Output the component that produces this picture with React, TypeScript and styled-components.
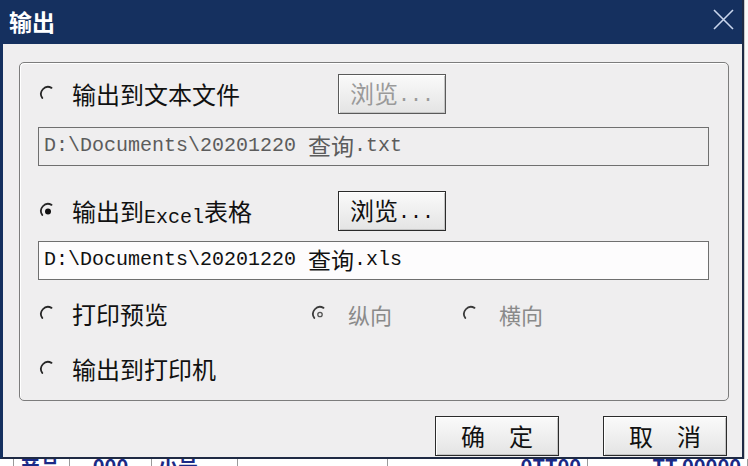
import styled, { createGlobalStyle } from 'styled-components';

const GlobalStyle = createGlobalStyle`
    html, body {
        margin: 0;
        padding: 0;
        background: #ffffff;
    }

    body {
        font-family: "Noto Sans CJK SC", "Noto Sans", sans-serif;
    }
`;

const CJK = `"Noto Sans CJK SC", "Noto Sans", sans-serif`;
const MONO = `"Liberation Mono", "Noto Sans CJK SC", monospace`;

const Page = styled.div`
    width: 748px;
    height: 466px;
    overflow: hidden;
    display: flex;
    flex-direction: column;
    background: #ffffff;
`;

const TopRow = styled.div`
    display: flex;
    height: 459px;
`;

const SideStrip = styled.div`
    flex: 1;
    border-left: 1px solid #c9c9c9;
    background: #fafafa;
`;

const Window = styled.div`
    width: 744px;
    height: 459px;
    box-sizing: border-box;
    display: flex;
    flex-direction: column;
    border-left: 3px solid #15305f;
    border-right: 2px solid #1f2a44;
    border-bottom: 2px solid #1f2a44;
    background: #efeeef;
`;

const TitleBar = styled.div`
    height: 41px;
    flex-shrink: 0;
    display: flex;
    align-items: center;
    justify-content: space-between;
    padding: 0 8px 3px 6px;
    background: #15305f;
    color: #ffffff;
    font-family: ${CJK};
    font-size: 23px;
    font-weight: 700;
`;

const CloseIcon = styled.svg`
    width: 21px;
    height: 21px;
    margin-top: -2px;
`;

const Body = styled.div`
    flex: 1;
    display: flex;
    flex-direction: column;
    padding: 18px 13px 0 16px;
`;

const GroupBox = styled.div`
    height: 339px;
    box-sizing: border-box;
    border: 1px solid #7c7c7c;
    border-radius: 5px;
    box-shadow: inset 1px 1px 0 #ffffff;
    padding: 13px 19px 0 18px;
    display: flex;
    flex-direction: column;
`;

const OptionRow = styled.div<{ $top: number }>`
    height: 40px;
    box-sizing: border-box;
    margin-top: ${(p) => p.$top}px;
    display: flex;
    align-items: center;
    padding: 0 0 5px 1px;
`;

const OptionCell = styled.label<{ $width?: number; $gap: number; $muted?: boolean }>`
    display: flex;
    align-items: center;
    gap: ${(p) => p.$gap}px;
    width: ${(p) => (p.$width ? `${p.$width}px` : 'auto')};
    flex-shrink: 0;
    font-family: ${CJK};
    font-size: ${(p) => (p.$muted ? 22 : 24)}px;
    color: ${(p) => (p.$muted ? '#8a8a8a' : '#111111')};
    white-space: nowrap;
`;

const Latin = styled.span`
    font-family: ${MONO};
    font-size: 20px;
    vertical-align: -2px;
`;

const Button = styled.button<{ $width: number; $disabled?: boolean }>`
    width: ${(p) => p.$width}px;
    height: 40px;
    box-sizing: border-box;
    padding: 0 0 2px;
    border: 1px solid ${(p) => (p.$disabled ? '#5a5a5a' : '#2b2b2b')};
    background: linear-gradient(#fafafa, #e4e4e4);
    box-shadow: inset 1px 1px 0 #ffffff, inset -1px -1px 0 #c4c4c4;
    font-family: ${CJK};
    font-size: 24px;
    color: ${(p) => (p.$disabled ? '#9a9a9a' : '#111111')};
    display: flex;
    align-items: center;
    justify-content: center;
`;

const Dots = styled.span`
    font-family: ${MONO};
    font-size: 20px;
    position: relative;
    top: 3px;
`;

const PathField = styled.div<{ $top: number; $enabled?: boolean }>`
    height: 39px;
    margin-top: ${(p) => p.$top}px;
    box-sizing: border-box;
    border: 1px solid #6f6f6f;
    background: ${(p) => (p.$enabled ? '#fdfcfd' : '#efeeef')};
    color: ${(p) => (p.$enabled ? '#111111' : '#5c5c5c')};
    display: flex;
    align-items: center;
    padding: 0 5px 3px;
    font-family: ${MONO};
    font-size: 20px;
    white-space: pre;
`;

const PathCjk = styled.span`
    font-family: ${CJK};
    font-size: 23px;
`;

const Footer = styled.div`
    display: flex;
    justify-content: flex-end;
    gap: 44px;
    margin-top: 15px;
    padding-right: 2px;
`;

const BackgroundRow = styled.div`
    height: 7px;
    overflow: hidden;
    display: flex;
    color: #1b2a86;
    font-family: ${CJK};
    font-size: 20px;
    font-weight: 700;
    line-height: 1;
`;

const BgCell = styled.div<{ $width: number; $align?: string }>`
    width: ${(p) => p.$width}px;
    height: 20px;
    flex-shrink: 0;
    box-sizing: border-box;
    overflow: hidden;
    border-right: 1px solid #9a9a9a;
    padding: 0 6px;
    margin-top: -3px;
    text-align: ${(p) => p.$align || 'left'};
    white-space: nowrap;
`;

type RadioProps = { checked?: boolean; muted?: boolean };

const Radio = ({ checked, muted }: RadioProps) => (
    <svg width="18" height="18" viewBox="0 0 18 18">
        <path
            d="M3.3 13 A7 7 0 0 1 12.5 2.9"
            fill="none"
            stroke={muted ? '#3a3a3a' : '#262626'}
            strokeWidth="1.8"
            strokeLinecap="round"
        />
        {checked &&
            (muted ? (
                <circle cx="9" cy="9.5" r="2.2" fill="none" stroke="#555" strokeWidth="1.3" />
            ) : (
                <circle cx="9" cy="9.5" r="3" fill="#111" />
            ))}
    </svg>
);

const App = () => {
    return (
        <Page>
            <GlobalStyle />
            <TopRow>
                <Window>
                    <TitleBar>
                        <span>输出</span>
                        <CloseIcon viewBox="0 0 21 21">
                            <path d="M1 1 L20 20 M20 1 L1 20" stroke="#c9d5ec" strokeWidth="1.6" />
                        </CloseIcon>
                    </TitleBar>
                    <Body>
                        <GroupBox>
                            <OptionRow $top={0}>
                                <OptionCell $width={299} $gap={15}>
                                    <Radio />
                                    输出到文本文件
                                </OptionCell>
                                <Button $width={108} $disabled>
                                    浏览<Dots>...</Dots>
                                </Button>
                            </OptionRow>
                            <PathField $top={11}>
                                D:\Documents\20201220 <PathCjk>查询</PathCjk>.txt
                            </PathField>
                            <OptionRow $top={27}>
                                <OptionCell $width={299} $gap={15}>
                                    <Radio checked />
                                    <span>
                                        输出到<Latin>Excel</Latin>表格
                                    </span>
                                </OptionCell>
                                <Button $width={108}>
                                    浏览<Dots>...</Dots>
                                </Button>
                            </OptionRow>
                            <PathField $top={8} $enabled>
                                D:\Documents\20201220 <PathCjk>查询</PathCjk>.xls
                            </PathField>
                            <OptionRow $top={16}>
                                <OptionCell $width={272} $gap={15}>
                                    <Radio />
                                    打印预览
                                </OptionCell>
                                <OptionCell $width={151} $gap={19} $muted>
                                    <Radio checked muted />
                                    纵向
                                </OptionCell>
                                <OptionCell $gap={19} $muted>
                                    <Radio muted />
                                    横向
                                </OptionCell>
                            </OptionRow>
                            <OptionRow $top={15}>
                                <OptionCell $gap={15}>
                                    <Radio />
                                    输出到打印机
                                </OptionCell>
                            </OptionRow>
                        </GroupBox>
                        <Footer>
                            <Button $width={124}>确　定</Button>
                            <Button $width={124}>取　消</Button>
                        </Footer>
                    </Body>
                </Window>
                <SideStrip />
            </TopRow>
            <BackgroundRow>
                <BgCell $width={14} />
                <BgCell $width={56}>产品</BgCell>
                <BgCell $width={82} $align="center">000</BgCell>
                <BgCell $width={86}>小号</BgCell>
                <BgCell $width={150} />
                <BgCell $width={200} $align="right">0TT00</BgCell>
                <BgCell $width={160} $align="right">TT 00000</BgCell>
            </BackgroundRow>
        </Page>
    );
};

export default App;
